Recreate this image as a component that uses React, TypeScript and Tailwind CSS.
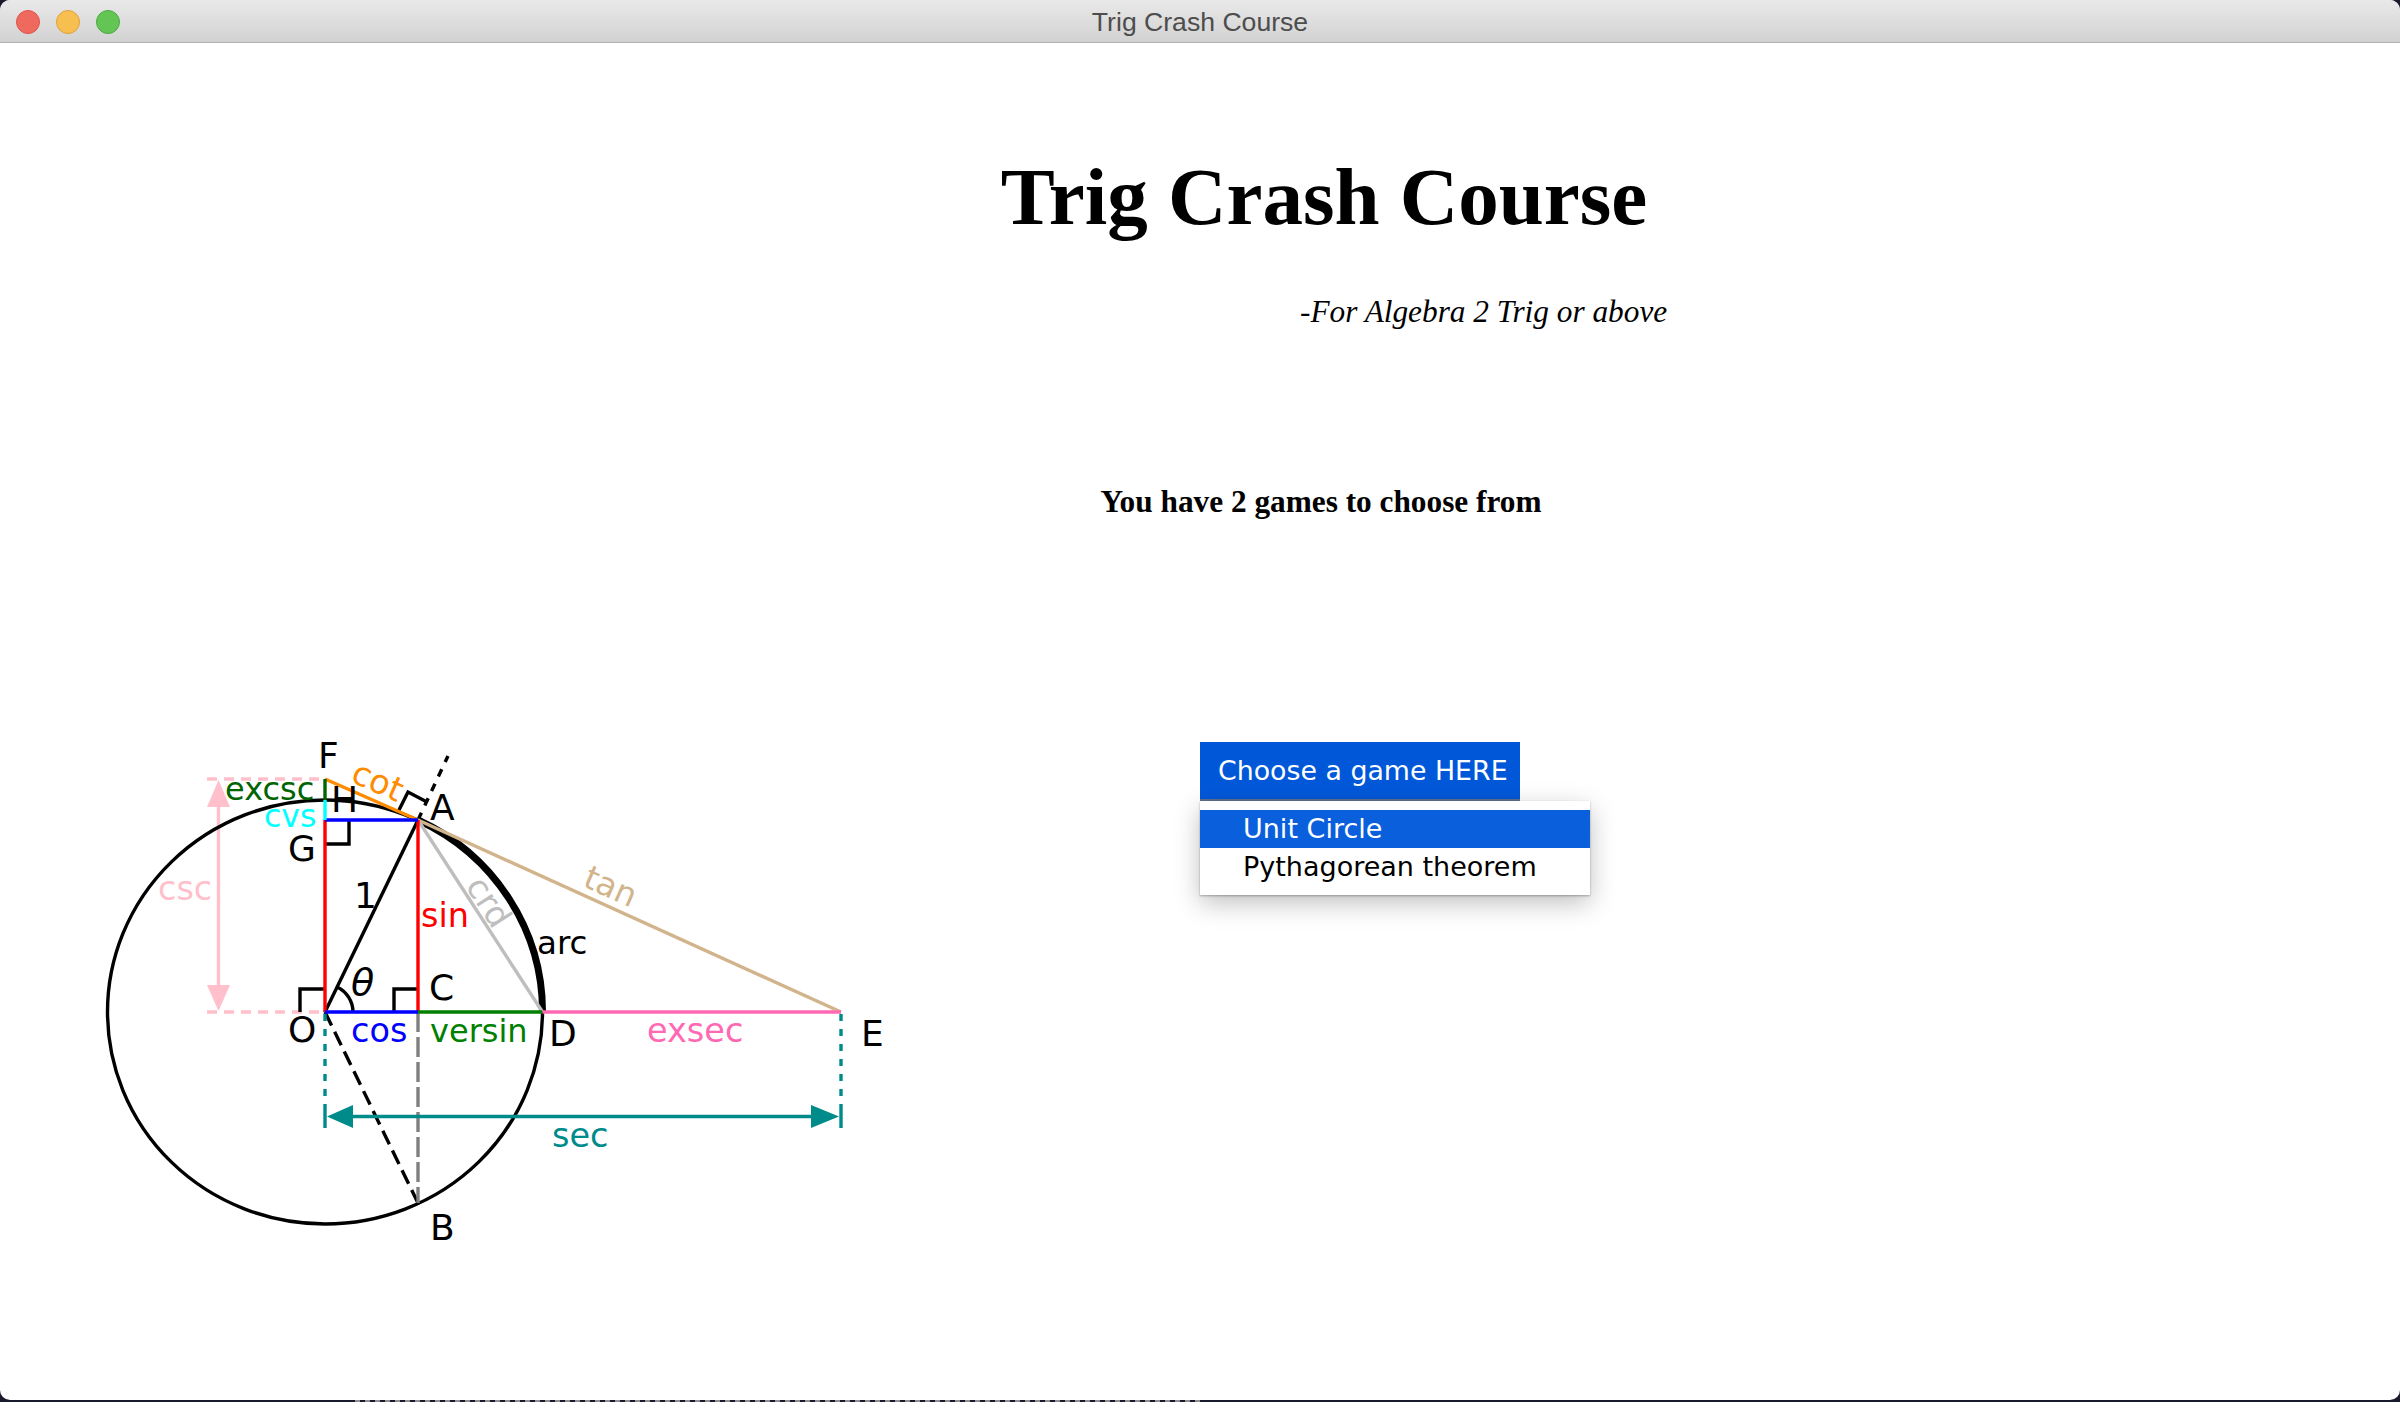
type Label = { t: string; x: number; y: number; size?: number; fill?: string; italic?: boolean }

const labels: Label[] = [
  { t: 'F', x: 318, y: 768, size: 36 },
  { t: 'excsc', x: 225, y: 800, size: 32, fill: '#006400' },
  { t: 'H', x: 331, y: 812, size: 36 },
  { t: 'cvs', x: 264, y: 827, size: 31.5, fill: '#00ffff' },
  { t: 'G', x: 288, y: 861, size: 36 },
  { t: 'csc', x: 158, y: 900, fill: '#ffc0cb' },
  { t: '1', x: 354, y: 908, size: 36 },
  { t: 'sin', x: 421, y: 927, fill: '#ff0000' },
  { t: 'θ', x: 351, y: 995, size: 38, italic: true },
  { t: 'C', x: 429, y: 1000, size: 36 },
  { t: 'A', x: 430, y: 820, size: 36 },
  { t: 'arc', x: 537, y: 954, size: 32.5 },
  { t: 'O', x: 288, y: 1042, size: 36 },
  { t: 'cos', x: 351, y: 1042, fill: '#0000ff' },
  { t: 'versin', x: 430, y: 1042, size: 32, fill: '#008000' },
  { t: 'D', x: 549, y: 1046, size: 36 },
  { t: 'exsec', x: 647, y: 1042, fill: '#ff69b4' },
  { t: 'E', x: 861, y: 1046, size: 36 },
  { t: 'sec', x: 552, y: 1147, fill: '#008b8b' },
  { t: 'B', x: 430, y: 1240, size: 36 },
]

function TrigDiagram() {
  return (
    <svg width="800" height="540" viewBox="100 720 800 540" className="block font-['DejaVu_Sans',sans-serif]">
      <g fill="none" strokeWidth="3.4">
        {/* pink csc guides */}
        <path d="M207 779H325M207 1012H325" stroke="#ffc0cb" strokeDasharray="10 7" />
        <path d="M218.5 800V990" stroke="#ffc0cb" />

        <ellipse cx="325" cy="1012" rx="217.5" ry="212" stroke="#000" />
        <path d="M418 820A217.5 212 0 0 1 542.5 1012" stroke="#000" strokeWidth="7" />

        {/* right angle marks */}
        <path d="M325 844H349V820M300 1012V989H325M394 1012V989H418M398 812L408 792L427 802" stroke="#000" />
        <path d="M353 1012A28 28 0 0 0 337 987" stroke="#000" />

        <path d="M325 1012L418 820" stroke="#000" />
        <path d="M325 1012L418 1203" stroke="#000" strokeDasharray="15 7" />
        <path d="M418 820L448 756" stroke="#000" strokeDasharray="8 8" />
        <path d="M418 1012V1203" stroke="#808080" strokeDasharray="20 5" />

        <path d="M418 820L542.5 1012" stroke="#bebebe" />
        <path d="M418 820L841 1012" stroke="#d2b48c" />
        <path d="M325 779L418 820" stroke="#ff8c00" />

        <path d="M325 1012V820M418 1012V820" stroke="#ff0000" />
        <path d="M325 820H418M325 1012H418" stroke="#0000ff" />
        <path d="M418 1012H542.5" stroke="#008000" />
        <path d="M542.5 1012H841" stroke="#ff69b4" />
        <path d="M325 779V800" stroke="#006400" />
        <path d="M325 800V820" stroke="#00ffff" />

        {/* sec */}
        <path d="M325 1014V1105M841 1014V1105" stroke="#008b8b" strokeDasharray="7 8" />
        <path d="M325 1105V1128M841 1105V1128M350 1116.5H815" stroke="#008b8b" />
      </g>

      <path d="M218.5 780L230 807H207Z" fill="#ffc0cb" />
      <path d="M218.5 1011L230 985H207Z" fill="#ffc0cb" />
      <path d="M327 1116.5L353 1105V1128Z" fill="#008b8b" />
      <path d="M839 1116.5L811 1105V1128Z" fill="#008b8b" />

      {labels.map((l) => (
        <text key={l.t} x={l.x} y={l.y} fontSize={l.size ?? 33.5} fontStyle={l.italic ? 'italic' : undefined} fill={l.fill ?? '#000'}>
          {l.t}
        </text>
      ))}
      <text x="377" y="783" fontSize="33.5" fill="#ff8c00" textAnchor="middle" dominantBaseline="middle" transform="rotate(24 377 783)">
        cot
      </text>
      <text x="487" y="903" fontSize="33.5" fill="#bebebe" textAnchor="middle" dominantBaseline="middle" transform="rotate(57 487 903)">
        crd
      </text>
      <text x="610" y="888" fontSize="33" fill="#d2b48c" textAnchor="middle" dominantBaseline="middle" transform="rotate(24 610 888)">
        tan
      </text>
    </svg>
  )
}

export default function App() {
  return (
    <div className="flex h-[1402px] w-[2400px] flex-col overflow-hidden bg-[#1a1a2e]">
      <div className="flex h-[1400px] flex-col overflow-hidden rounded-[10px] bg-white">
        <header className="relative flex h-[43px] shrink-0 items-center justify-center border-b border-[#b1b1b1] bg-gradient-to-b from-[#e9e9e9] to-[#d2d2d2]">
          <div className="absolute left-[16px] top-[10px] flex gap-[16px]">
            <span className="h-[24px] w-[24px] rounded-full border border-[#dd5549] bg-[#f0695f]" />
            <span className="h-[24px] w-[24px] rounded-full border border-[#dfa23b] bg-[#f7bf4f]" />
            <span className="h-[24px] w-[24px] rounded-full border border-[#4ea942] bg-[#62c554]" />
          </div>
          <span className="pt-[3px] font-['Liberation_Sans',sans-serif] text-[26.6px] text-[#4d4d4d]">Trig Crash Course</span>
        </header>

        <main className="flex flex-1">
          <aside className="w-[900px] pl-[100px] pt-[677px]">
            <TrigDiagram />
          </aside>

          <section className="w-[848px] font-['Liberation_Serif',serif] text-black">
            <h1 className="pt-[114px] text-center text-[81px] font-bold leading-none">Trig Crash Course</h1>
            <p className="mt-[58px] pl-[400px] text-[31.3px] italic leading-none">-For Algebra 2 Trig or above</p>
            <h2 className="mt-[159px] pr-[6px] text-center text-[31.3px] font-bold leading-none">You have 2 games to choose from</h2>

            <div className="ml-[300px] mt-[224px] font-['DejaVu_Sans',sans-serif]">
              <button className="block h-[59px] w-[320px] border-b-2 border-[#5f6f8c] bg-[#0058d9] pl-[18px] pt-[2px] text-left text-[26.8px] text-white">
                Choose a game HERE
              </button>
              <ul className="w-[390px] bg-white py-[9px] text-[27px] text-black shadow-[0_1px_2px_rgba(0,0,0,0.3),0_8px_24px_rgba(0,0,0,0.25)]">
                <li className="flex h-[38px] items-center bg-[#0a5fdc] pl-[43px] pt-[2px] text-white">Unit Circle</li>
                <li className="flex h-[38px] items-center pl-[43px] pt-[2px]">Pythagorean theorem</li>
              </ul>
            </div>
          </section>
        </main>
      </div>

      <div className="flex h-[2px] shrink-0 pl-[355px]">
        <div className="h-full w-[845px] bg-[repeating-linear-gradient(90deg,#8f8f8f_0,#8f8f8f_5px,transparent_5px,transparent_10px)]" />
      </div>
    </div>
  )
}
